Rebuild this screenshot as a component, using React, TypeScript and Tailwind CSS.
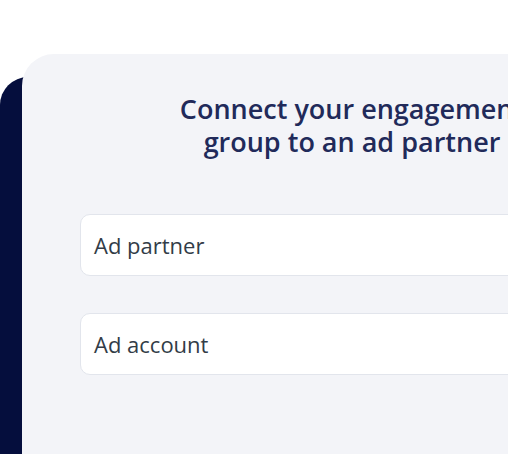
const App = () => {
  return (
    <div className="w-[508px] h-[454px] overflow-hidden bg-white">
      <div className="flex pt-[54px] h-full">
        <div className="shrink-0 w-[60px] mt-[23px] rounded-tl-[28px] bg-[#050e3d]" />
        <div className="relative -ml-[38px] shrink-0 w-[660px] rounded-tl-[32px] bg-[#f3f4f8] px-[58px] pt-[38px]">
          <h1
            className="text-center text-[27px] leading-[33px] font-semibold text-[#212a5a]"
            style={{ fontFamily: "'Open Sans', sans-serif" }}
          >
            Connect your engagement
            <br />
            group to an ad partner
          </h1>
          <div
            className="mt-[56px] flex flex-col gap-[37px]"
            style={{ fontFamily: "'Open Sans', sans-serif" }}
          >
            <div className="h-[62px] flex items-center rounded-[10px] border border-[#e2e5ec] bg-white px-[13px] text-[22px] text-[#323c47]">
              Ad partner
            </div>
            <div className="h-[62px] flex items-center rounded-[10px] border border-[#e2e5ec] bg-white px-[13px] text-[22px] text-[#323c47]">
              Ad account
            </div>
          </div>
        </div>
      </div>
    </div>
  );
};

export default App;
